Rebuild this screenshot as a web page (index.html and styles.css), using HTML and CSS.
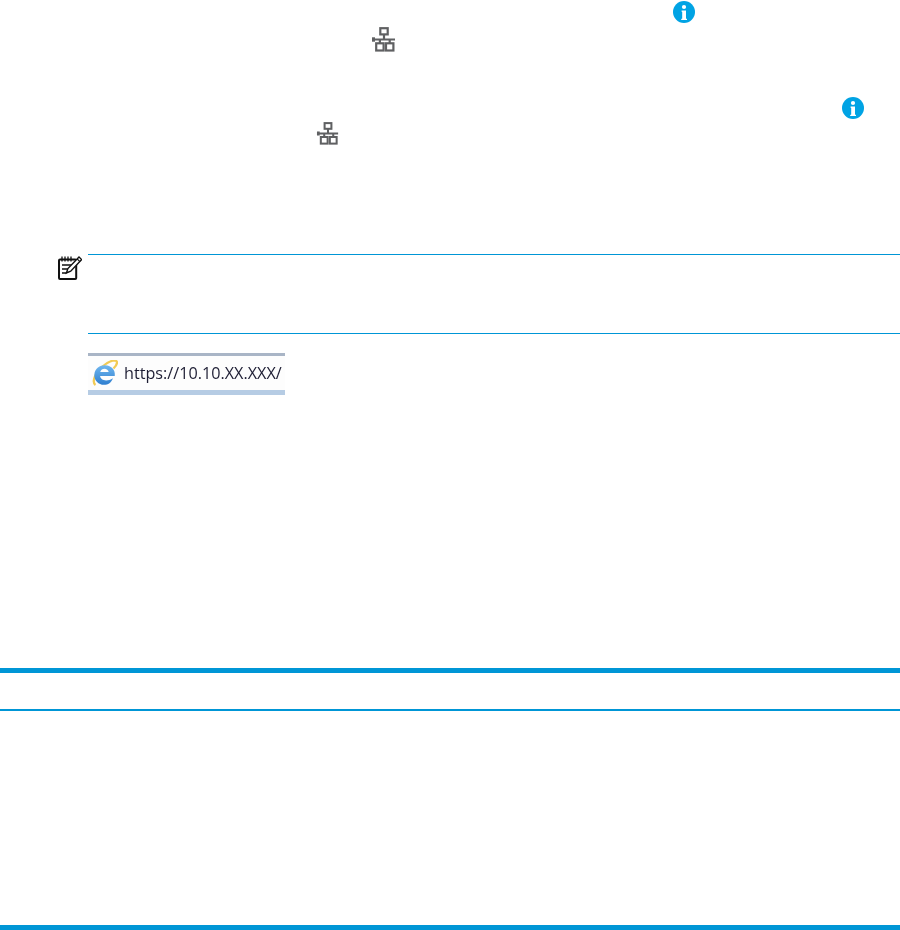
FILE: index.html
```html
<!DOCTYPE html>
<html lang="en">
<head>
<meta charset="utf-8">
<title>Printer setup</title>
<link rel="stylesheet" href="styles.css">
</head>
<body>
<main class="page">
  <section class="steps">
    <svg class="icon info info-a" viewBox="0 0 22 22"><circle cx="11" cy="11" r="11" fill="#00a3e4"/><circle cx="11" cy="6" r="2.100" fill="#fff"/><path d="M8.600 9.600h4.400v7.900l1 .4V19H8.200v-1.100l1-.4v-6.400l-.6-.4z" fill="#fff"/></svg>
    <svg class="icon net net-a" viewBox="0 0 24 25"><use href="#network"/></svg>
    <svg class="icon info info-b" viewBox="0 0 22 22"><circle cx="11" cy="11" r="11" fill="#00a3e4"/><circle cx="11" cy="6" r="2.100" fill="#fff"/><path d="M8.600 9.600h4.400v7.900l1 .4V19H8.200v-1.100l1-.4v-6.400l-.6-.4z" fill="#fff"/></svg>
    <svg class="icon net net-b" viewBox="0 0 24 25"><defs><g id="network" fill="none" stroke="#5f6062" stroke-width="2.200"><rect x="8.300" y="1.200" width="7.400" height="6.200"/><rect x="4.200" y="16.300" width="7.400" height="7.200"/><rect x="14" y="16.300" width="7.400" height="7.200"/><path d="M12 7.400v5.100M1 12.500h22M7.900 12.500v3.800M17.700 12.500v3.800"/><path d="M0 10.300h3v4.400H0z" fill="#5f6062" stroke="none"/></g></defs><use href="#network"/></svg>
  </section>

  <section class="note">
    <svg class="note-icon" viewBox="0 0 24 24">
      <rect x="1" y="3.400" width="17.200" height="19.600" rx="1" fill="none" stroke="#111" stroke-width="2"/>
      <path d="M4 .6v4.800M7 .6v4.800M10 .6v4.800M13 .6v4.800" stroke="#111" stroke-width="1.300" fill="none"/>
      <path d="M4 9h10M4 13h6.500M4 17h4.500" stroke="#111" stroke-width="1.300" fill="none"/>
      <path d="M21 1l2.700 2.600-11 11.600-4.300 1.800 1.500-4.400z" fill="#fff" stroke="#111" stroke-width="1.400"/>
      <path d="M19.200 3l2.700 2.600" stroke="#111" stroke-width="1.100" fill="none"/>
    </svg>
    <div class="note-body"></div>
  </section>

  <figure class="address">
    <svg class="ie" viewBox="0 0 26 26">
      <defs><linearGradient id="ie-blue" x1="0" y1="0" x2="0" y2="1"><stop offset="0" stop-color="#6fb6ee"/><stop offset="1" stop-color="#2f7fd0"/></linearGradient></defs>
      <path d="M3.500 25C-.5 22 3 13 10.500 6.500S25 -1 25 2.500c0 2-1.500 4-3.500 6" fill="none" stroke="#f2cb55" stroke-width="2.300"/>
      <path transform="translate(-2.500 -2.200) scale(1.220)" d="M20.700 15h-12c.3 3.500 5.500 5 10.500 1.800-1.300 4.200-5.200 6-9 5.200C6 21 3.500 17.500 4 13.500 4.600 8.500 8.800 6 13 6.200c5 .2 8.400 4 7.700 8.800zM8.800 11.700h6.900c-.2-3.600-6.300-3.900-6.900 0z" fill="url(#ie-blue)" fill-rule="evenodd"/>
    </svg>
    <figcaption class="url">https://10.10.XX.XXX/</figcaption>
  </figure>

  <div class="band band-top"></div>
  <div class="band-thin"></div>
  <div class="band band-bottom"></div>
</main>
</body>
</html>
```

FILE: styles.css
```css
html, body {
  margin: 0;
  padding: 0;
  background: #fff;
}

.page {
  width: 900px;
  height: 930px;
  overflow: hidden;
  display: flex;
  flex-direction: column;
  font-family: "Open Sans", "Liberation Sans", sans-serif;
}

.steps {
  display: flex;
  flex-direction: column;
  align-items: flex-start;
  height: 254px;
}

.icon {
  display: block;
  flex: none;
}

.info {
  width: 22px;
  height: 22px;
}

.net {
  width: 24px;
  height: 25px;
}

.info-a { margin: 1px 0 0 673px; }
.net-a { margin: 4px 0 0 372px; }
.info-b { margin: 45px 0 0 842px; }
.net-b { margin: 3px 0 0 316px; height: 23px; }

.note {
  display: flex;
  align-items: flex-start;
  padding-left: 58px;
}

.note-icon {
  flex: none;
  width: 24px;
  height: 24px;
  margin: 2px 6px 0 0;
}

.note-body {
  flex: 1;
  height: 78px;
  border-top: 1px solid #0096d6;
  border-bottom: 1px solid #0096d6;
}

.address {
  display: flex;
  align-items: center;
  gap: 6px;
  box-sizing: border-box;
  width: 197px;
  height: 42px;
  margin: 19px 0 0 88px;
  padding: 0 0 1px 4px;
  background: #fdfdfd;
  border-top: 3px solid #a9b5c6;
  border-bottom: 5px solid #b6cce4;
}

.ie {
  flex: none;
  width: 26px;
  height: 26px;
  filter: blur(0.3px);
}

.url {
  margin: 0;
  font-size: 16.2px;
  font-weight: 500;
  line-height: 20px;
  white-space: nowrap;
  color: #1e1e34;
  filter: blur(0.4px);
}

.band {
  height: 5px;
  background: #0096d6;
}

.band-top {
  margin-top: 273px;
}

.band-thin {
  height: 2px;
  margin-top: 36px;
  background: #0096d6;
}

.band-bottom {
  margin-top: 214px;
}
```
